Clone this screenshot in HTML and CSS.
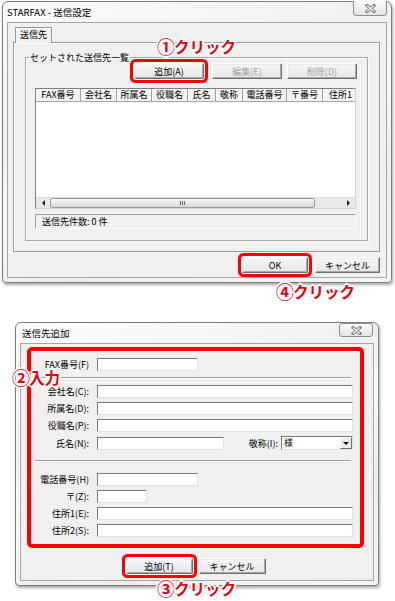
FILE: index.html
```html
<!DOCTYPE html>
<html lang="ja">
<head>
  <meta charset="UTF-8">
  <meta name="viewport" content="width=device-width, initial-scale=1.0">
  <title>STARFAX 送信設定</title>
  <link rel="stylesheet" href="styles.css">
</head>
<body>

<div class="page">

  <!-- 送信設定 window -->
  <div class="win win-main">
    <div class="titlebar">
      <span class="title">STARFAX - 送信設定</span>
      <span class="close close-top">
        <svg width="11" height="9" viewBox="0 0 11 9"><path d="M2 1.5L9 7.5M9 1.5L2 7.5" stroke="#7a7a7a" stroke-width="3" stroke-linecap="square"/><path d="M2 1.5L9 7.5M9 1.5L2 7.5" stroke="#f6f6f6" stroke-width="1.2"/></svg>
      </span>
    </div>
    <div class="client client-main">
      <div class="tabs"><span class="tab">送信先</span></div>
      <div class="tab-panel">
        <fieldset class="group">
          <legend>セットされた送信先一覧</legend>
          <div class="group-buttons">
            <button class="btn hl btn-add">追加(A)</button>
            <button class="btn btn-edit" disabled>編集(E)</button>
            <button class="btn btn-del" disabled>削除(D)</button>
          </div>
          <div class="list">
            <div class="list-head">
              <span class="col c1">FAX番号</span>
              <span class="col c2">会社名</span>
              <span class="col c3">所属名</span>
              <span class="col c4">役職名</span>
              <span class="col c5">氏名</span>
              <span class="col c6">敬称</span>
              <span class="col c7">電話番号</span>
              <span class="col c8">〒番号</span>
              <span class="col c9">住所1</span>
            </div>
            <div class="list-body"></div>
            <div class="hscroll">
              <span class="sb-arrow"><i class="tri-left"></i></span>
              <span class="sb-thumb"><i class="grip"></i></span>
              <span class="sb-track"></span>
              <span class="sb-arrow"><i class="tri-right"></i></span>
            </div>
          </div>
          <div class="status">送信先件数: 0 件</div>
        </fieldset>
      </div>
      <div class="dialog-buttons">
        <button class="btn hl btn-ok">OK</button>
        <button class="btn btn-cancel">キャンセル</button>
      </div>
    </div>
  </div>

  <!-- 送信先追加 window -->
  <div class="win win-add">
    <div class="titlebar titlebar-add">
      <span class="title">送信先追加</span>
      <span class="close close-add">
        <svg width="11" height="9" viewBox="0 0 11 9"><path d="M2 1.5L9 7.5M9 1.5L2 7.5" stroke="#7a7a7a" stroke-width="3" stroke-linecap="square"/><path d="M2 1.5L9 7.5M9 1.5L2 7.5" stroke="#f6f6f6" stroke-width="1.2"/></svg>
      </span>
    </div>
    <div class="client client-add">
      <div class="form-box">
        <div class="fields first">
          <label>FAX番号(F)</label>
          <div class="cell"><input type="text" class="w-s"></div>
        </div>
        <div class="sep"></div>
        <div class="fields">
          <label>会社名(C):</label>
          <div class="cell"><input type="text"></div>
          <label>所属名(D):</label>
          <div class="cell"><input type="text"></div>
          <label>役職名(P):</label>
          <div class="cell"><input type="text"></div>
          <label>氏名(N):</label>
          <div class="cell">
            <input type="text" class="w-m">
            <span class="inline-label">敬称(I):</span>
            <span class="select">
              <span class="select-value">様</span>
              <span class="select-btn"><i class="tri-down"></i></span>
            </span>
          </div>
        </div>
        <div class="sep sep-2"></div>
        <div class="fields">
          <label>電話番号(H)</label>
          <div class="cell"><input type="text" class="w-s"></div>
          <label>〒(Z):</label>
          <div class="cell"><input type="text" class="w-xs"></div>
          <label>住所1(E):</label>
          <div class="cell"><input type="text"></div>
          <label>住所2(S):</label>
          <div class="cell"><input type="text"></div>
        </div>
      </div>
      <div class="add-buttons">
        <button class="btn hl btn-wide">追加(T)</button>
        <button class="btn btn-wide">キャンセル</button>
      </div>
    </div>
  </div>

  <!-- 手順の注釈 -->
  <span class="note note-1"><span class="num">①</span>クリック</span>
  <span class="note note-2"><span class="num">②</span>入力</span>
  <span class="note note-3"><span class="num">③</span>クリック</span>
  <span class="note note-4"><span class="num">④</span>クリック</span>

</div>

</body>
</html>
```

FILE: styles.css
```css
* {
  box-sizing: border-box;
}

body {
  margin: 0;
  background: #fff;
  font-family: "Noto Sans CJK JP", "Noto Sans", sans-serif;
  font-size: 9px;
  color: #000;
}

.page {
  position: relative;
  width: 395px;
  height: 601px;
  overflow: hidden;
  padding-top: 1px;
}

/* windows */
.win {
  display: flex;
  flex-direction: column;
  border: 1px solid #7d7d7d;
  border-radius: 6px 6px 4px 4px;
  background: linear-gradient(160deg, #fdfdfd 0%, #eef0f2 35%, #fbfbfb 50%, #eceef1 70%, #f4f5f6 100%);
  box-shadow: 1px 2px 3px rgba(0, 0, 0, 0.35);
}

.win-main {
  width: 390px;
  height: 282px;
  margin-left: 2px;
}

.win-add {
  width: 364px;
  height: 264px;
  margin: 39px 0 0 15px;
}

.titlebar {
  display: flex;
  align-items: flex-start;
  height: 20px;
  padding-left: 4px;
}

.titlebar-add {
  padding-left: 6px;
}

.title {
  flex: 1;
  font-size: 9.5px;
  line-height: 21px;
}

.close {
  display: flex;
  align-items: center;
  justify-content: center;
  width: 34px;
  height: 15px;
  border: 1px solid #8c8c8c;
  background: linear-gradient(#fbfbfb, #e4e4e4);
}

.close-top {
  margin: -1px 4px 0 0;
  border-top: none;
  border-radius: 0 0 4px 4px;
}

.close-add {
  height: 14px;
  margin-right: 5px;
  border-radius: 3px;
}

.client {
  flex: 1;
  display: flex;
  flex-direction: column;
  margin: 0 4px 4px;
  border: 1px solid #a5a5a5;
  background: #f0f0f0;
}

.client-main {
  padding: 4px 6px 0 5px;
}

/* tab */
.tabs {
  display: flex;
  padding-left: 2px;
}

.tab {
  position: relative;
  z-index: 1;
  height: 16px;
  margin-bottom: -1px;
  padding: 0 4px;
  border: 1px solid #9a9a9a;
  border-bottom: none;
  background: #f0f0f0;
  line-height: 14px;
  box-shadow: inset 1px 1px #fff;
}

.tab-panel {
  height: 210px;
  padding: 9px 11px 0 11px;
  border: 1px solid #9a9a9a;
  box-shadow: inset 1px 1px #fff;
}

/* group box */
.group {
  margin: 0;
  padding: 0 11px 11px 9px;
  border: 1px solid #a8a8a8;
  box-shadow: inset 1px 1px #fff, 1px 1px #fff;
  min-width: 0;
}

.group legend {
  margin-left: -6px;
  padding: 0 1px;
  line-height: 11px;
}

.group-buttons {
  display: flex;
  justify-content: flex-end;
  margin-right: -1px;
}

.btn {
  height: 16px;
  padding: 0;
  border: 1px solid;
  border-color: #fff #6e6e6e #6e6e6e #fff;
  border-radius: 1px;
  background: linear-gradient(#f6f6f6, #e7e7e7);
  box-shadow: inset -1px -1px #a9a9a9, inset 1px 1px #e9e9e9;
  font: inherit;
  line-height: 13px;
  color: #000;
}

.btn:disabled {
  color: #a3a3a3;
}

.btn.hl {
  box-shadow: inset -1px -1px #a9a9a9, 0 0 0 1px #fff, 0 0 0 4px #ff0000;
  border-radius: 2px;
}

.btn-add,
.btn-edit,
.btn-del {
  width: 70px;
}

.btn-edit {
  margin-left: 8px;
}

.btn-del {
  margin-left: 5px;
}

/* list view */
.list {
  display: flex;
  flex-direction: column;
  height: 121px;
  margin-top: 9px;
  border: 1px solid;
  border-color: #7f7f7f #d4d4d4 #d4d4d4 #7f7f7f;
  background: #fff;
}

.list-head {
  display: flex;
  height: 13px;
  overflow: hidden;
  border-bottom: 1px solid #a6a6a6;
  background: #f3f3f3;
}

.col {
  flex: none;
  border-right: 1px solid #a0a0a0;
  box-shadow: inset 1px 0 #fff;
  text-align: center;
  line-height: 12px;
  white-space: nowrap;
}

.c1 { width: 45px; }
.c2 { width: 36px; }
.c3 { width: 35px; }
.c4 { width: 36px; }
.c5 { width: 28px; }
.c6 { width: 27px; }
.c7 { width: 44px; }
.c8 { width: 36px; }
.c9 { width: 36px; }

.list-body {
  flex: 1;
}

.hscroll {
  display: flex;
  height: 11px;
  background: #e9e9e9;
  border-top: 1px solid #dcdcdc;
}

.sb-arrow {
  display: flex;
  align-items: center;
  justify-content: center;
  width: 14px;
}

.tri-left,
.tri-right,
.tri-down {
  display: block;
  width: 0;
  height: 0;
  border: 3px solid transparent;
}

.tri-left {
  border-left: none;
  border-right-color: #222;
}

.tri-right {
  border-right: none;
  border-left-color: #222;
}

.tri-down {
  border-bottom: none;
  border-top-color: #111;
  border-width: 3px 3px 0;
}

.sb-thumb {
  display: flex;
  align-items: center;
  justify-content: center;
  width: 265px;
  border: 1px solid #9c9c9c;
  border-radius: 2px;
  background: linear-gradient(#f7f7f7, #d9d9d9);
}

.grip {
  display: block;
  width: 5px;
  height: 4px;
  background: repeating-linear-gradient(90deg, #6b6b6b 0 1px, transparent 1px 2px);
}

.sb-track {
  flex: 1;
}

.status {
  height: 15px;
  margin-top: 5px;
  padding-left: 6px;
  border: 1px solid;
  border-color: #a0a0a0 #fff #fff #a0a0a0;
  line-height: 13px;
}

.dialog-buttons {
  display: flex;
  justify-content: flex-end;
  gap: 7px;
  margin-top: 5px;
}

.btn-ok {
  width: 66px;
}

.btn-cancel {
  width: 65px;
}

/* 送信先追加 */
.client-add {
  padding: 3px 0 0;
}

.form-box {
  margin: 0 9px 0 6px;
  padding: 7px 7px 7px 0;
  border: 4px solid #ff0000;
  border-radius: 5px;
}

.fields {
  display: grid;
  grid-template-columns: 58px 1fr;
  column-gap: 8px;
  row-gap: 4px;
}

.fields label {
  align-self: center;
  text-align: right;
  line-height: 11px;
  white-space: nowrap;
}

.cell {
  display: flex;
  align-items: center;
}

.cell input {
  width: 100%;
  height: 13px;
  margin: 0;
  padding: 0;
  border: 1px solid;
  border-color: #7a7a7a #e2e2e2 #e2e2e2 #7a7a7a;
  background: #fff;
  font: inherit;
}

.cell input.w-s {
  width: 101px;
}

.cell input.w-xs {
  width: 50px;
}

.cell input.w-m {
  width: 127px;
}

.inline-label {
  margin-left: auto;
  margin-right: 3px;
  line-height: 11px;
}

.select {
  display: flex;
  flex: none;
  width: 72px;
  height: 14px;
  border: 1px solid;
  border-color: #7a7a7a #e2e2e2 #e2e2e2 #7a7a7a;
  background: #fff;
}

.select-value {
  flex: 1;
  padding-left: 2px;
  line-height: 12px;
}

.select-btn {
  display: flex;
  align-items: center;
  justify-content: center;
  width: 12px;
  border: 1px solid;
  border-color: #fff #6e6e6e #6e6e6e #fff;
  background: #ececec;
}

.sep {
  height: 2px;
  margin: 6px 2px 6px 4px;
  border-top: 1px solid #a0a0a0;
  border-bottom: 1px solid #fff;
}

.sep-2 {
  margin-top: 10px;
  margin-bottom: 11px;
}

.add-buttons {
  display: flex;
  justify-content: center;
  gap: 6px;
  margin-top: 10px;
  padding-right: 3px;
}

.btn-wide {
  width: 67px;
}

/* annotations */
.note {
  position: absolute;
  display: flex;
  align-items: center;
  height: 15px;
  font-size: 15.5px;
  font-weight: 700;
  line-height: 15px;
  color: #e60012;
  white-space: nowrap;
  text-shadow: 1px 0 #fff, -1px 0 #fff, 0 1px #fff, 0 -1px #fff,
    1px 1px #fff, -1px -1px #fff, 1px -1px #fff, -1px 1px #fff,
    2px 0 #fff, -2px 0 #fff, 0 2px #fff, 0 -2px #fff;
}

.num {
  font-size: 18px;
  margin-right: -1px;
}

.note-1 {
  left: 157px;
  top: 39px;
}

.note-2 {
  left: 12px;
  top: 370px;
}

.note-3 {
  left: 157px;
  top: 581px;
}

.note-4 {
  left: 276px;
  top: 284px;
}
```
